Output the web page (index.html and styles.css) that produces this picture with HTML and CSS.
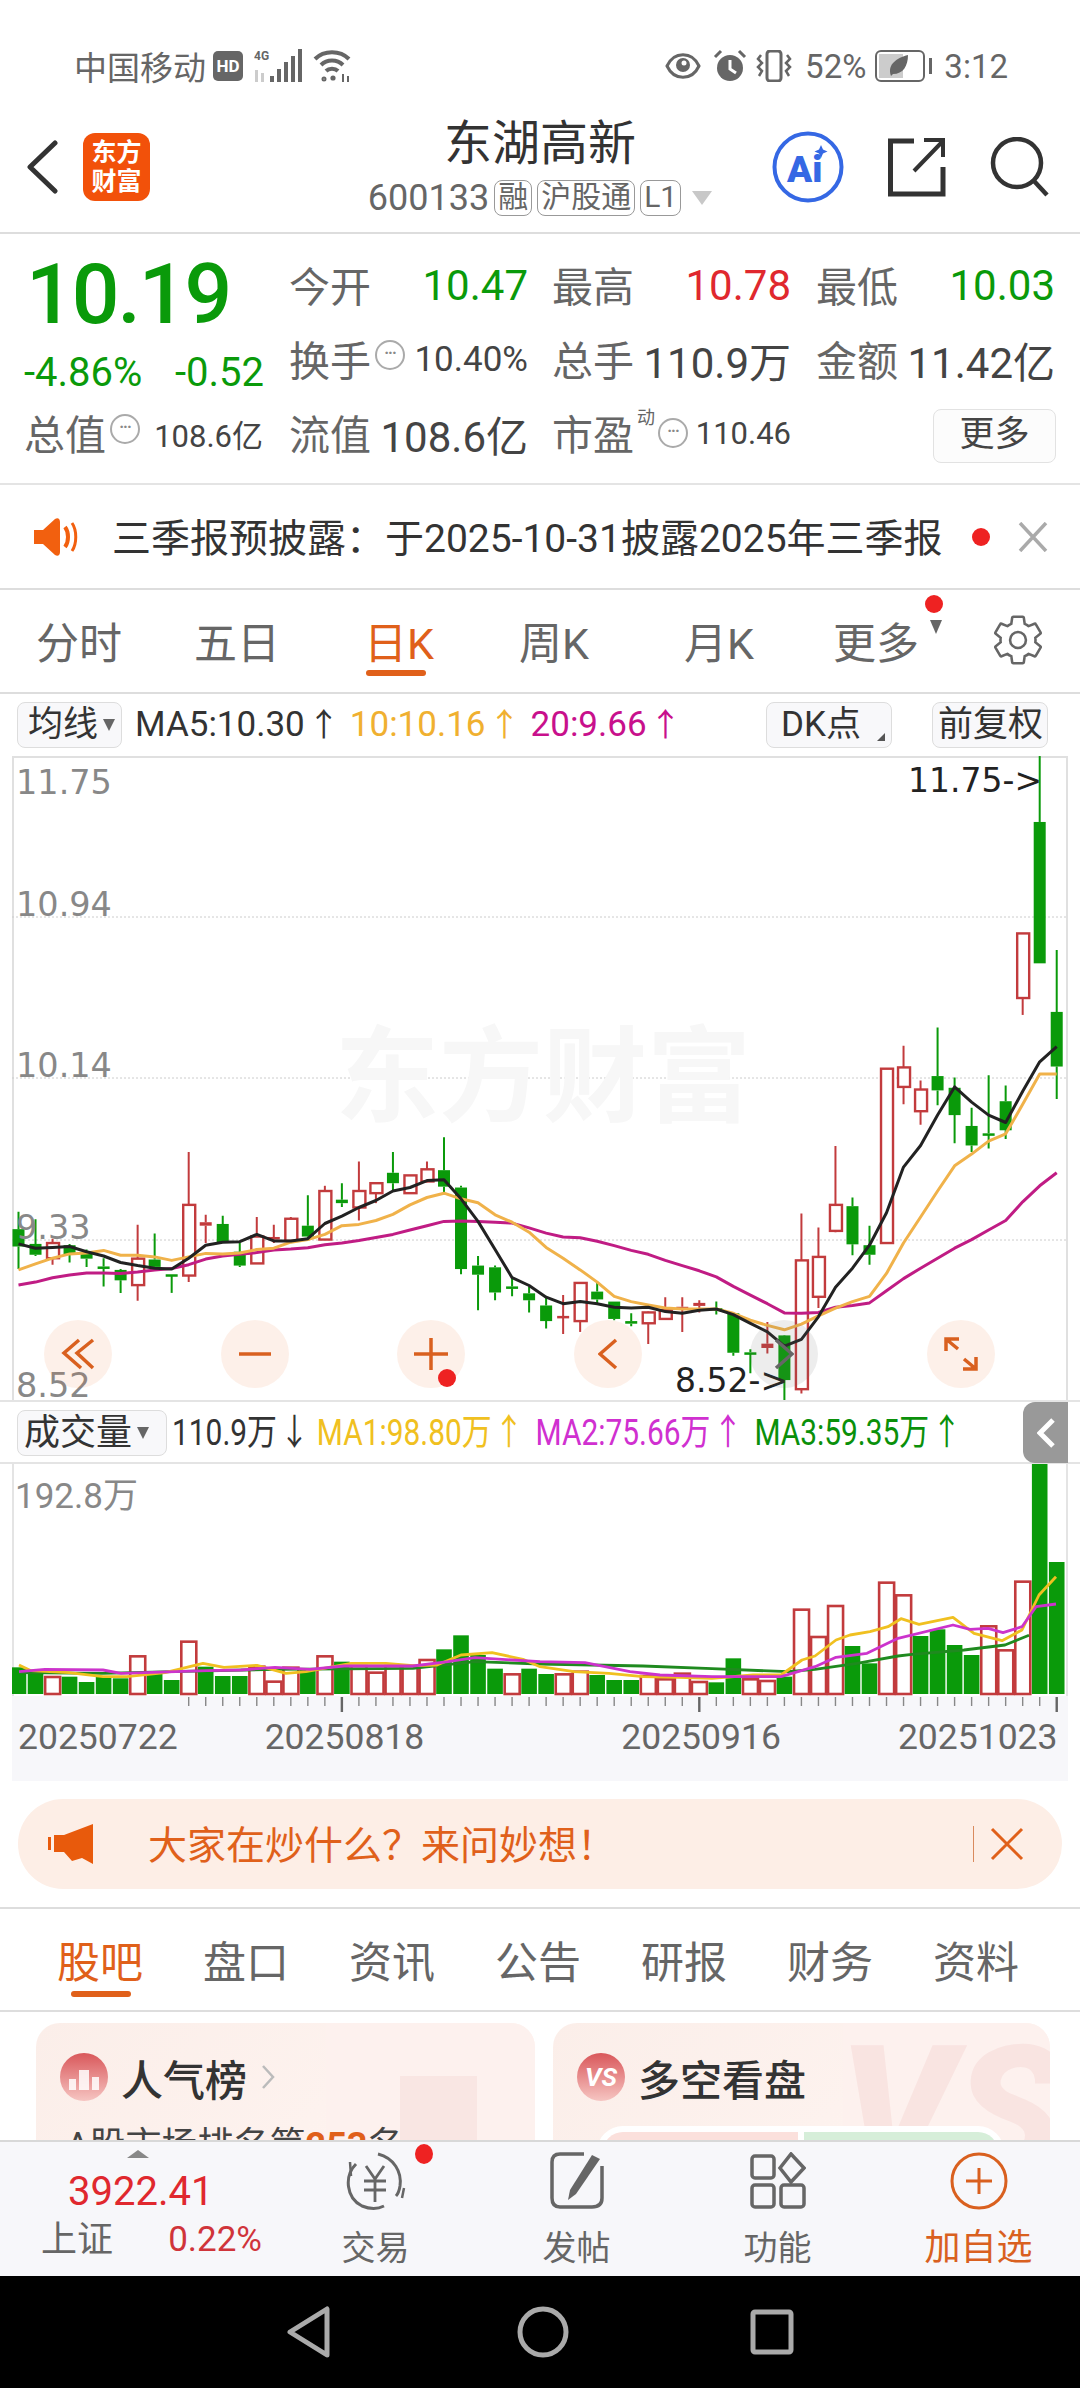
FILE: index.html
```html
<!DOCTYPE html>
<html lang="zh-CN">
<head>
    <meta charset="UTF-8">
    <meta name="viewport" content="width=device-width, initial-scale=1.0">
    <title>东湖高新</title>
    <link rel="stylesheet" href="styles.css">
</head>
<body>
<div class="page">
    <!-- status bar -->
    <div class="status">
        <span class="carrier">中国移动</span>
        <span class="hd">HD</span>
        <svg class="sig" width="50" height="34" viewBox="0 0 50 34">
            <text x="0" y="11" class="sig-txt">4G</text>
            <g fill="#ccc"><rect x="1" y="21" width="3" height="12"/><rect x="7" y="24" width="3" height="9"/></g>
            <g fill="#666"><rect x="16" y="27" width="4" height="6"/><rect x="23" y="20" width="4" height="13"/><rect x="30" y="13" width="4" height="20"/><rect x="37" y="7" width="4" height="26"/><rect x="44" y="0" width="4" height="33"/></g>
        </svg>
        <svg class="wifi" width="38" height="32" viewBox="0 0 38 32" fill="none" stroke="#666" stroke-width="4">
            <path d="M2 9 C11 0 27 0 36 9"/><path d="M8 15 C14 9 24 9 30 15"/><path d="M13 21 C16 18 22 18 25 21"/>
            <circle cx="11" cy="29" r="1" stroke-width="3"/><circle cx="20" cy="28" r="2.6" fill="#666" stroke="none"/>
            <path d="M30 24v8M35 26v6" stroke-width="2"/>
        </svg>
        <span class="status-gap"></span>
        <svg width="36" height="30" viewBox="0 0 36 30" fill="none" stroke="#666" stroke-width="3"><path d="M2 15 C9 0 27 0 34 15 C27 30 9 30 2 15Z"/><circle cx="18" cy="14" r="7" fill="#666" stroke="none"/><circle cx="19" cy="12" r="2.5" fill="#fff" stroke="none"/></svg>
        <svg class="st-alarm" width="34" height="34" viewBox="0 0 34 34"><circle cx="17" cy="19" r="13" fill="#666"/><path d="M17 11v9l6 4" fill="none" stroke="#fff" stroke-width="3"/><path d="M2 8 L8 2M32 8 L26 2" stroke="#666" stroke-width="3"/></svg>
        <svg class="st-vib" width="36" height="32" viewBox="0 0 36 32" fill="none" stroke="#666" stroke-width="2.5"><rect x="11" y="1" width="14" height="30" rx="3" stroke-width="3"/><path d="M5 5 L2 9 L6 13 L2 17 L6 21 L3 26M31 5 L34 9 L30 13 L34 17 L30 21 L33 26"/></svg>
        <span class="batt-pct">52%</span>
        <svg class="st-batt" width="58" height="32" viewBox="0 0 58 32"><rect x="1" y="1" width="48" height="30" rx="5" fill="#fff" stroke="#666" stroke-width="2"/><rect x="4" y="4" width="24" height="24" fill="#ccc"/><path d="M16 26 C12 14 22 8 33 5 C33 16 28 24 18 24Z" fill="#666"/><rect x="54" y="8" width="3" height="16" fill="#666"/></svg>
        <span class="clock">3:12</span>
    </div>

    <!-- header -->
    <div class="header">
        <div class="header-left">
            <svg width="31" height="54" viewBox="0 0 31 54" fill="none" stroke="#333" stroke-width="5" stroke-linecap="round" stroke-linejoin="round"><path d="M28 3 L3 27 L28 51"/></svg>
            <div class="logo"><span>东方</span><span>财富</span></div>
        </div>
        <div class="header-mid">
            <div class="title">东湖高新</div>
            <div class="subtitle">
                <span class="code">600133</span>
                <span class="tag">融</span><span class="tag">沪股通</span><span class="tag">L1</span>
                <span class="tri-down"></span>
            </div>
        </div>
        <div class="header-right">
            <svg width="72" height="72" viewBox="0 0 72 72"><circle cx="36" cy="36" r="33.5" fill="#fff" stroke="#3568e4" stroke-width="4"/><text x="15" y="51" class="ai-txt">Ai</text><path d="M49 14 L51 18.5 L55.5 20.5 L51 22.5 L49 27 L47 22.5 L42.5 20.5 L47 18.5Z" fill="#3568e4"/></svg>
            <svg width="58" height="60" viewBox="0 0 58 60" fill="none" stroke="#333" stroke-width="5"><path d="M26 4 H2.5 V57 H55 V30"/><path d="M26 34 L55 4 M36 3 H55 V20" stroke-width="4"/></svg>
            <svg width="60" height="60" viewBox="0 0 60 60" fill="none" stroke="#333" stroke-width="4.5"><circle cx="27" cy="26" r="24"/><path d="M44 44 L57 58"/></svg>
        </div>
    </div>

    <!-- quote -->
    <div class="quote">
        <div class="q-price">10.19</div>
        <div class="q-cell"><span class="lbl">今开</span><span class="val green">10.47</span></div>
        <div class="q-cell"><span class="lbl">最高</span><span class="val red">10.78</span></div>
        <div class="q-cell"><span class="lbl">最低</span><span class="val green">10.03</span></div>

        <div class="q-change"><span>-4.86%</span><span>-0.52</span></div>
        <div class="q-cell"><span class="lbl">换手<i class="dots">···</i></span><span class="val small">10.40%</span></div>
        <div class="q-cell"><span class="lbl">总手</span><span class="val">110.9万</span></div>
        <div class="q-cell"><span class="lbl">金额</span><span class="val">11.42亿</span></div>

        <div class="q-cell"><span class="lbl">总值<i class="dots">···</i></span><span class="val tiny">108.6亿</span></div>
        <div class="q-cell"><span class="lbl">流值</span><span class="val">108.6亿</span></div>
        <div class="q-cell"><span class="lbl">市盈<sup class="dyn">动</sup><i class="dots dots-pe">···</i></span><span class="val tiny">110.46</span></div>
        <div class="q-cell q-more"><span class="more-btn">更多</span></div>
    </div>

    <!-- notice -->
    <div class="notice">
        <svg width="44" height="38" viewBox="0 0 44 38" fill="#f2600f"><path d="M0 12 H9 L21 1 C24 -1 26 1 26 4 V34 C26 37 24 39 21 37 L9 26 H0Z"/><path d="M31 9 C35 14 35 24 31 29" fill="none" stroke="#f2600f" stroke-width="4"/><path d="M38 5 C43 12 43 26 38 33" fill="none" stroke="#f2600f" stroke-width="3"/></svg>
        <span class="notice-txt">三季报预披露：于2025-10-31披露2025年三季报</span>
        <span class="notice-dot"></span>
        <svg width="30" height="30" viewBox="0 0 30 30" stroke="#aaa" stroke-width="3.5"><path d="M2 1 L28 29 M28 1 L2 29"/></svg>
    </div>

    <!-- period tabs -->
    <div class="period-tabs">
        <span>分时</span><span>五日</span><span class="on">日K</span><span>周K</span><span>月K</span>
        <span class="more-tab">更多<i class="m-dot"></i><i class="m-tri"></i></span>
        <svg class="gear" width="56" height="56" viewBox="0 0 24 24" fill="none" stroke="#666" stroke-width="1.1"><path d="M19.43 12.98c.04-.32.07-.64.07-.98s-.03-.66-.07-.98l2.11-1.65c.19-.15.24-.42.12-.64l-2-3.46c-.12-.22-.39-.3-.61-.22l-2.49 1c-.52-.4-1.08-.73-1.69-.98l-.38-2.65C14.46 2.18 14.25 2 14 2h-4c-.25 0-.46.18-.49.42l-.38 2.65c-.61.25-1.17.59-1.69.98l-2.49-1c-.23-.09-.49 0-.61.22l-2 3.46c-.13.22-.07.49.12.64l2.11 1.65c-.04.32-.07.65-.07.98s.03.66.07.98l-2.11 1.65c-.19.15-.24.42-.12.64l2 3.46c.12.22.39.3.61.22l2.49-1c.52.4 1.08.73 1.69.98l.38 2.65c.03.24.24.42.49.42h4c.25 0 .46-.18.49-.42l.38-2.65c.61-.25 1.17-.59 1.69-.98l2.49 1c.23.09.49 0 .61-.22l2-3.46c.12-.22.07-.49-.12-.64l-2.11-1.65z"/><circle cx="12" cy="12" r="3.4"/></svg>
    </div>

    <!-- MA legend -->
    <div class="ma-row">
        <span class="pick">均线<i class="pick-tri"></i></span>
        <span class="ma ma-black">MA5:10.30<b>↑</b></span>
        <span class="ma ma-orange">10:10.16<b>↑</b></span>
        <span class="ma ma-pink">20:9.66<b>↑</b></span>
        <span class="pick pick-dk">DK点<i class="corner"></i></span>
        <span class="pick pick-fq">前复权</span>
    </div>

    <!-- k line -->
    <div class="kline-wrap">
        <svg id="kline" class="kline" width="1056" height="644" viewBox="12 756 1056 644">
            <g class="grid"><path d="M12 917H1068M12 1078H1068M12 1240H1068"/></g>
            <text x="335" y="1114" class="watermark">东方财富</text>
            <g id="candles"></g>
            <g class="axis">
                <text x="16" y="794">11.75</text>
                <text x="16" y="916">10.94</text>
                <text x="16" y="1077">10.14</text>
                <text x="16" y="1239">9.33</text>
                <text x="16" y="1397">8.52</text>
            </g>
            <text x="908" y="792" class="mark">11.75-&gt;</text>
            <text x="675" y="1392" class="mark">8.52-&gt;</text>
        </svg>
        <div class="chart-btns">
            <span class="c-btn"><svg width="34" height="32" viewBox="0 0 34 32"><path d="M18 2 L3 15 L20 30 M32 2 L16 15 L32 30"/></svg></span>
            <span class="c-btn"><svg width="34" height="32" viewBox="0 0 34 32"><path d="M1 16 H33"/></svg></span>
            <span class="c-btn c-plus"><svg width="34" height="34" viewBox="0 0 34 34"><path d="M0 17 H34 M17 1 V33"/></svg><i></i></span>
            <span class="c-btn"><svg width="20" height="32" viewBox="0 0 20 32"><path d="M18 2 L2 16 L18 30"/></svg></span>
            <span class="c-btn c-grey"><svg width="20" height="32" viewBox="0 0 20 32"><path d="M2 2 L18 16 L2 30"/></svg></span>
            <span class="c-btn"><svg width="34" height="34" viewBox="0 0 34 34"><path d="M2 14 V2 H15 M2 2 L14 12 M32 20 V32 H19 M32 32 L20 22"/></svg></span>
        </div>
    </div>

    <!-- volume -->
    <div class="vol-head">
        <span class="pick pick-vol">成交量<i class="pick-tri"></i></span>
        <div class="vol-legend">
            <span class="v-black">110.9万<b>↓</b></span>
            <span class="v-yellow">MA1:98.80万<b>↑</b></span>
            <span class="v-pink">MA2:75.66万<b>↑</b></span>
            <span class="v-green">MA3:59.35万<b>↑</b></span>
        </div>
        <span class="toggle"><svg width="18" height="30" viewBox="0 0 18 30" fill="none" stroke="#fff" stroke-width="5"><path d="M16 2 L3 15 L16 28"/></svg></span>
    </div>
    <div class="vol-wrap">
        <svg id="vol" class="vol" width="1056" height="232" viewBox="12 1464 1056 232">
            <g id="bars"></g>
            <text x="15" y="1508" class="vol-axis">192.8万</text>
        </svg>
    </div>
    <div class="dates">
        <svg id="ticks" class="ticks" width="1056" height="18" viewBox="12 1696 1056 18"></svg>
        <div class="date-row"><span>20250722</span><span>20250818</span><span>20250916</span><span>20251023</span></div>
    </div>

    <!-- ask banner -->
    <div class="banner">
        <svg width="46" height="40" viewBox="0 0 46 40"><path d="M0 13h3v13H0z" fill="#e85a0c"/><path d="M6 11 H16 L45 0 V40 L34 34 L24 37 L16 28 H6Z" fill="#e85a0c"/></svg>
        <span class="banner-txt">大家在炒什么？来问妙想！</span>
        <span class="banner-sep"></span>
        <svg width="34" height="34" viewBox="0 0 34 34" stroke="#e0601a" stroke-width="3"><path d="M2 2 L32 32 M32 2 L2 32"/></svg>
    </div>

    <!-- bottom tabs -->
    <div class="info-tabs">
        <span class="on">股吧</span><span>盘口</span><span>资讯</span><span>公告</span><span>研报</span><span>财务</span><span>资料</span>
    </div>

    <!-- cards, cut off by the bottom bar -->
    <div class="cards">
        <div class="card">
            <i class="card-shade"></i><i class="card-bar"></i>
            <div class="card-head">
                <svg width="48" height="48" viewBox="0 0 48 48"><defs><linearGradient id="cg" x1="0" y1="0" x2="0" y2="1"><stop offset="0" stop-color="#d9575a"/><stop offset="1" stop-color="#f6c5c2"/></linearGradient></defs><circle cx="24" cy="24" r="24" fill="url(#cg)"/><path d="M9 37V26h7v11zM19 37V17h10v20zM32 37V24h7v13z" fill="#fff" opacity=".85"/></svg>
                <span class="card-title">人气榜</span>
                <svg class="card-arrow" width="14" height="24" viewBox="0 0 14 24" fill="none" stroke="#bbb" stroke-width="2.5"><path d="M2 1 L12 12 L2 23"/></svg>
            </div>
            <div class="card-sub">A股市场排名第<b>253</b>名</div>
        </div>
        <div class="card">
            <i class="card-shade"></i><span class="card-vs">VS</span>
            <div class="card-head">
                <span class="vs-icon">VS</span>
                <span class="card-title">多空看盘</span>
            </div>
            <div class="ls-box"><i class="ls-red"></i><i class="ls-green"></i></div>
        </div>
    </div>

    <!-- bottom bar -->
    <div class="bottom">
        <div class="index">
            <i class="idx-tri"></i>
            <div class="idx-val">3922.41</div>
            <div class="idx-row"><span>上证</span><span class="idx-pct">0.22%</span></div>
        </div>
        <div class="b-item">
            <svg width="68" height="58" viewBox="0 0 68 58" fill="none" stroke="#666" stroke-width="3"><path d="M14 12 C2 24 4 46 20 54 C30 58 38 56 42 54"/><path d="M36 2 C52 6 60 20 58 34 C57 40 56 42 54 44"/><path d="M9 24 L8 10 M60 46 L62 36" stroke-width="2.5"/><path d="M24 14 L33 27 L42 14 M22 29 H44 M22 38 H44 M33 27 V50" stroke-width="2.8"/></svg>
            <i class="b-dot"></i>
            <span>交易</span>
        </div>
        <div class="b-item">
            <svg width="58" height="58" viewBox="0 0 58 58" fill="none" stroke="#666" stroke-width="3.5"><path d="M36 2 H12 Q4 2 4 10 V46 Q4 55 12 55 H44 Q54 55 54 46 V14"/><path d="M22 38 L44 3 L52 7 L28 42 L20 48Z" fill="#666" stroke="none"/></svg>
            <span>发帖</span>
        </div>
        <div class="b-item">
            <svg width="56" height="58" viewBox="0 0 56 58" fill="none" stroke="#666" stroke-width="3.5"><rect x="2" y="4" width="22" height="22" rx="3"/><path d="M41 2 L54 16 L41 30 L30 16Z"/><rect x="2" y="33" width="22" height="22" rx="3"/><rect x="31" y="33" width="23" height="22" rx="3"/></svg>
            <span>功能</span>
        </div>
        <div class="b-item b-add">
            <svg width="58" height="58" viewBox="0 0 58 58" fill="none" stroke="#d9601f" stroke-width="3"><circle cx="29" cy="29" r="27"/><path d="M16 29 H42 M29 16 V42"/></svg>
            <span>加自选</span>
        </div>
    </div>

    <!-- android nav -->
    <div class="nav">
        <svg width="44" height="52" viewBox="0 0 44 52" fill="none" stroke="#aaa" stroke-width="5" stroke-linejoin="round"><path d="M40 3 V49 L3 26Z"/></svg>
        <svg width="52" height="52" viewBox="0 0 52 52" fill="none" stroke="#aaa" stroke-width="5"><circle cx="26" cy="26" r="23"/></svg>
        <svg class="nav-sq" width="44" height="46" viewBox="0 0 44 46" fill="none" stroke="#aaa" stroke-width="5"><rect x="3" y="3" width="38" height="40" rx="2"/></svg>
    </div>
</div>
<script src="chart.js"></script>
</body>
</html>
```

FILE: styles.css
```css
* {
    box-sizing: border-box;
}

html, body {
    margin: 0;
    padding: 0;
}

body {
    width: 1080px;
    height: 2388px;
    overflow: hidden;
    background: #fff;
    font-family: Roboto, "Noto Sans CJK SC", sans-serif;
    color: #333;
}

i { font-style: normal; }

.page {
    width: 1080px;
    height: 2388px;
    display: flex;
    flex-direction: column;
    overflow: hidden;
}

/* status bar */
.status {
    height: 110px;
    padding: 22px 72px 0 74px;
    display: flex;
    align-items: center;
    color: #666;
    font-size: 33px;
    flex: none;
}

.carrier { width: 133px; }

.hd {
    margin-left: 6px;
    width: 30px;
    height: 30px;
    border-radius: 5px;
    background: #666;
    color: #fff;
    font-size: 17px;
    font-weight: 700;
    text-align: center;
    line-height: 30px;
}

.sig { margin-left: 11px; }
.sig-txt { font: 700 12px Roboto, sans-serif; fill: #666; }
.wifi { margin-left: 9px; }
.status-gap { flex: 1; }
.st-alarm { margin-left: 12px; }
.st-vib { margin-left: 9px; }
.batt-pct { margin-left: 13px; font-size: 33px; }
.st-batt { margin-left: 9px; }
.clock { margin-left: 11px; font-size: 33px; }

/* header */
.header {
    height: 124px;
    flex: none;
    display: grid;
    grid-template-columns: 1fr auto 1fr;
    border-bottom: 2px solid #ddd;
}

.header-left {
    display: flex;
    align-items: center;
    padding: 0 0 8px 27px;
}

.logo {
    margin-left: 25px;
    width: 67px;
    height: 68px;
    border-radius: 12px;
    background: #f2510a;
    color: #fff;
    font-size: 25px;
    font-weight: 700;
    line-height: 29px;
    text-align: center;
    display: flex;
    flex-direction: column;
    justify-content: center;
}

.header-mid {
    padding-top: 8px;
    text-align: center;
}

.title {
    font-size: 48px;
    line-height: 52px;
    color: #333;
}

.subtitle {
    margin-top: 8px;
    height: 40px;
    display: flex;
    align-items: center;
    color: #666;
}

.code { font-size: 36px; margin-right: 5px; }

.tag {
    height: 36px;
    margin-right: 5px;
    padding: 0 3px;
    border: 1.5px solid #999;
    border-radius: 8px;
    font-size: 30px;
    line-height: 32px;
}

.tri-down {
    margin-left: 6px;
    border-left: 10px solid transparent;
    border-right: 10px solid transparent;
    border-top: 14px solid #c8c8c8;
}

.header-right {
    display: flex;
    align-items: center;
    justify-content: flex-end;
    padding: 0 30px 8px 0;
    gap: 44px;
}

.ai-txt { font: 900 37px Roboto, sans-serif; fill: #3568e4; }

/* quote block */
.quote {
    height: 251px;
    flex: none;
    padding: 14px 26px 13px 24px;
    display: grid;
    grid-template-columns: 265px 263px 264px 1fr;
    grid-template-rows: 74px 74px 74px;
    border-bottom: 2px solid #e4e4e4;
}

.q-price {
    font-size: 84px;
    font-weight: 500;
    color: #0a9a0a;
    line-height: 74px;
    padding: 10px 0 0 2px;
    letter-spacing: -2px;
    white-space: nowrap;
}

.q-change {
    width: 240px;
    display: flex;
    justify-content: space-between;
    align-items: center;
    padding-top: 26px;
    font-size: 40px;
    color: #0a9a0a;
}

.q-cell {
    width: 239px;
    display: flex;
    justify-content: space-between;
    align-items: center;
    white-space: nowrap;
}

.lbl {
    color: #666;
    font-size: 41px;
    display: flex;
    align-items: center;
    padding-bottom: 2px;
}

.val { font-size: 42px; color: #444; }
.val.small { font-size: 35px; }
.val.tiny { font-size: 31px; }
.val.green { color: #0a9a0a; }
.val.red { color: #e0282e; }

.dots {
    width: 30px;
    height: 30px;
    margin: -6px 0 0 4px;
    border: 2px solid #aaa;
    border-radius: 50%;
    color: #888;
    font-size: 16px;
    font-weight: 700;
    line-height: 22px;
    text-align: center;
    letter-spacing: -1px;
}

.dyn {
    font-size: 18px;
    margin: -28px 0 0 3px;
    line-height: 20px;
}

.dots-pe { margin-left: 3px; margin-top: 2px; }

.q-more { justify-content: flex-end; width: 240px; }

.more-btn {
    width: 123px;
    height: 54px;
    margin-top: 6px;
    border: 1.5px solid #e2e2e2;
    border-radius: 8px;
    background: #fcfcfc;
    text-align: center;
    font-size: 35px;
    line-height: 50px;
    color: #444;
}

/* notice */
.notice {
    height: 105px;
    flex: none;
    padding: 0 32px 0 34px;
    display: flex;
    align-items: center;
    border-bottom: 2px solid #ddd;
}

.notice-txt {
    margin-left: 34px;
    width: 860px;
    padding-bottom: 4px;
    font-size: 39px;
    color: #333;
    white-space: nowrap;
}

.notice-dot {
    width: 18px;
    height: 18px;
    border-radius: 50%;
    background: #ee2222;
}

.notice svg:last-child { margin-left: auto; }

/* period tabs */
.period-tabs {
    height: 104px;
    flex: none;
    padding-bottom: 2px;
    display: grid;
    grid-template-columns: 158px 158px 166px 144px 186px 128px 1fr;
    align-items: center;
    text-align: center;
    font-size: 43px;
    color: #666;
    border-bottom: 2px solid #ddd;
}

.period-tabs .on {
    position: relative;
    color: #e0601a;
}

.period-tabs .on::after {
    content: "";
    position: absolute;
    left: 50px;
    top: 61px;
    width: 60px;
    height: 6px;
    border-radius: 3px;
    background: #e0601a;
}

.more-tab { position: relative; }

.m-dot {
    position: absolute;
    left: 113px;
    top: -14px;
    width: 18px;
    height: 18px;
    border-radius: 50%;
    background: #ee2222;
}

.m-tri {
    position: absolute;
    left: 118px;
    top: 11px;
    border-left: 6px solid transparent;
    border-right: 6px solid transparent;
    border-top: 14px solid #666;
}

.gear { margin-left: 50px; }

/* MA row */
.ma-row {
    height: 62px;
    flex: none;
    padding: 8px 32px 0 17px;
    display: flex;
    align-items: flex-start;
    font-size: 35px;
    white-space: nowrap;
}

.pick {
    flex: none;
    height: 46px;
    border: 1.5px solid #ddd;
    border-radius: 8px;
    background: #f8f8fa;
    color: #333;
    font-size: 35px;
    line-height: 42px;
    display: flex;
    align-items: center;
    padding: 0 6px 0 10px;
    position: relative;
}

.pick-tri {
    margin-left: 5px;
    border-left: 6px solid transparent;
    border-right: 6px solid transparent;
    border-top: 12px solid #666;
}

.ma { line-height: 46px; margin-left: 13px; }
.ma b { font-weight: 400; font-size: 32px; margin-left: 3px; }
.ma-black { color: #333; }
.ma-orange { color: #f0b030; margin-left: 10px; }
.ma-pink { color: #c8108c; margin-left: 10px; }

.pick-dk {
    margin-left: auto;
    width: 126px;
    padding-left: 14px;
}

.corner {
    position: absolute;
    right: 6px;
    bottom: 6px;
    border-left: 8px solid transparent;
    border-bottom: 8px solid #555;
}

.pick-fq {
    margin-left: 40px;
    width: 116px;
    padding: 0 5px;
}

/* k line chart */
.kline-wrap {
    position: relative;
    height: 644px;
    flex: none;
    margin: 0 12px;
    border: solid #e0e0e0;
    border-width: 2px 2px 0;
    width: 1056px;
}

.kline {
    position: absolute;
    left: -2px;
    top: -2px;
}

.grid path {
    fill: none;
    stroke: #ccc;
    stroke-width: 1;
    stroke-dasharray: 2 2;
}

.watermark {
    font-size: 104px;
    font-weight: 700;
    fill: #f7f7f7;
}

.axis text {
    font-family: "DejaVu Sans", sans-serif;
    font-size: 33.5px;
    fill: #888;
}

.mark {
    font-family: "DejaVu Sans", sans-serif;
    font-size: 33px;
    fill: #222;
}

.chart-btns {
    position: absolute;
    left: 30px;
    top: 562px;
    display: flex;
    gap: 108.6px;
}

.c-btn {
    position: relative;
    width: 68px;
    height: 68px;
    border-radius: 50%;
    background: rgba(240, 110, 40, 0.1);
    display: flex;
    align-items: center;
    justify-content: center;
}

.c-btn svg {
    fill: none;
    stroke: #d9601f;
    stroke-width: 3.5;
}

.c-grey { background: rgba(110, 110, 110, 0.12); }
.c-grey svg { stroke: #666; }

.c-plus i {
    position: absolute;
    left: 41px;
    top: 49px;
    width: 18px;
    height: 18px;
    border-radius: 50%;
    background: #ee2222;
}

/* volume */
.vol-head {
    position: relative;
    height: 64px;
    flex: none;
    padding: 8px 0 0 17px;
    display: flex;
    align-items: flex-start;
    border-top: 2px solid #e4e4e4;
    border-bottom: 2px solid #e4e4e4;
}

.pick-vol {
    width: 150px;
    font-size: 36px;
    padding-left: 6px;
}

.vol-legend {
    margin: 0 0 0 5px;
    display: flex;
    font-size: 36px;
    line-height: 46px;
    white-space: nowrap;
    transform: scaleX(0.83);
    transform-origin: left center;
}

.vol-legend b { font-weight: 400; margin-left: 3px; }
.vol-legend span { margin-right: 9px; }
.vol-legend .v-yellow, .vol-legend .v-pink { margin-right: 14px; }
.v-black { color: #333; }
.v-yellow { color: #f0c020; }
.v-pink { color: #d030d0; }
.v-green { color: #0a900a; }

.toggle {
    position: absolute;
    right: 12px;
    top: 0;
    width: 45px;
    height: 61px;
    border-radius: 12px 0 0 12px;
    background: #999;
    display: flex;
    align-items: center;
    justify-content: center;
}

.vol-wrap {
    height: 232px;
    flex: none;
    margin: 0 12px;
    width: 1056px;
    border-right: 2px solid #e4e4e4;
    border-left: 2px solid #e4e4e4;
    position: relative;
}

.vol {
    position: absolute;
    left: -2px;
    top: 0;
}

.vol-axis {
    font-size: 35px;
    fill: #888;
}

.dates {
    height: 85px;
    flex: none;
    margin: 0 12px;
    width: 1056px;
    background: #f7f7fa;
}

.ticks { display: block; }

.date-row {
    padding-left: 6px;
    display: flex;
    font-size: 35.5px;
    color: #666;
    line-height: 42px;
    margin-top: 2px;
}

.date-row span:nth-child(2) { margin-left: 87px; }
.date-row span:nth-child(3) { margin-left: 197px; }
.date-row span:nth-child(4) { margin-left: 117px; }

/* banner */
.banner {
    height: 90px;
    flex: none;
    margin: 18px 18px 18px;
    padding: 0 38px 0 30px;
    border-radius: 45px;
    background: #fdeee6;
    display: flex;
    align-items: center;
}

.banner-txt {
    margin-left: 54px;
    padding-bottom: 4px;
    font-size: 39px;
    color: #e0601a;
}

.banner-sep {
    margin-left: auto;
    width: 1.5px;
    height: 36px;
    background: #d98a5e;
}

.banner svg:last-child { margin-left: 16px; }

/* info tabs */
.info-tabs {
    height: 105px;
    flex: none;
    padding: 0 0 2px 57px;
    display: flex;
    gap: 62px;
    align-items: center;
    font-size: 43px;
    color: #666;
    border-top: 2px solid #ddd;
    border-bottom: 2px solid #ddd;
}

.info-tabs span { width: 84px; white-space: nowrap; }

.info-tabs .on {
    position: relative;
    color: #e0601a;
}

.info-tabs .on::after {
    content: "";
    position: absolute;
    left: 14px;
    top: 63px;
    width: 60px;
    height: 6px;
    border-radius: 3px;
    background: #e0601a;
}

/* cards */
.cards {
    height: 128px;
    flex: none;
    overflow: hidden;
    padding: 11px 29px 0 36px;
    display: grid;
    grid-template-columns: 499px 497px;
    gap: 18px;
}

.card {
    position: relative;
    height: 240px;
    border-radius: 24px;
    overflow: hidden;
    background: linear-gradient(135deg, #fbeee9, #fff6f3);
    padding: 30px 0 0 24px;
}

.card-shade {
    position: absolute;
    left: 290px;
    top: 0;
    width: 209px;
    height: 240px;
    background: #fdf1ee;
}

.card-bar {
    position: absolute;
    left: 364px;
    top: 53px;
    width: 77px;
    height: 190px;
    background: #f9e6e3;
}

.card-vs {
    position: absolute;
    left: 286px;
    top: -6px;
    font-size: 180px;
    line-height: 190px;
    font-weight: 900;
    font-style: italic;
    color: #f9e4e1;
}

.card-head {
    position: relative;
    display: flex;
    align-items: center;
    height: 48px;
}

.card-title {
    margin-left: 13px;
    font-size: 42px;
    font-weight: 500;
    color: #333;
}

.card-arrow { margin-left: 14px; }

.vs-icon {
    width: 48px;
    height: 48px;
    border-radius: 50%;
    background: linear-gradient(#d9575a, #f6c5c2);
    color: #fff;
    font-size: 26px;
    font-weight: 700;
    font-style: italic;
    line-height: 48px;
    text-align: center;
}

.card-sub {
    position: relative;
    margin: 25px 0 0 6px;
    font-size: 36px;
    line-height: 40px;
    color: #444;
}

.card-sub b { color: #e0601a; }

.ls-box {
    position: relative;
    margin: 25px 46px 0 20px;
    height: 60px;
    padding: 4px;
    border: 2px solid #fff;
    border-radius: 26px 26px 0 0;
    display: flex;
    gap: 6px;
    background: #fff;
}

.ls-red { flex: 1; background: #fbe0dc; border-radius: 20px 0 0 0; }
.ls-green { flex: 1; background: #d6eed9; border-radius: 0 20px 0 0; }

/* bottom bar */
.bottom {
    height: 136px;
    flex: none;
    display: grid;
    grid-template-columns: 275px repeat(4, 201px);
    background: #f7f7fa;
    border-top: 2px solid #d8d8d8;
}

.index { position: relative; padding: 0 0 0 41px; }

.idx-tri {
    position: absolute;
    left: 127px;
    top: 8px;
    border-left: 11px solid transparent;
    border-right: 11px solid transparent;
    border-bottom: 8px solid #888;
}

.idx-val {
    margin: 28px 0 0 27px;
    font-size: 40px;
    line-height: 44px;
    color: #e0282e;
}

.idx-row {
    margin-top: 4px;
    display: flex;
    width: 221px;
    justify-content: space-between;
    align-items: center;
    font-size: 36px;
    line-height: 44px;
    color: #666;
}

.idx-pct { color: #d0343a; font-size: 35px; }

.b-item {
    position: relative;
    display: flex;
    flex-direction: column;
    align-items: center;
    padding-top: 10px;
    font-size: 34px;
    color: #666;
    line-height: 40px;
}

.b-item span { margin-top: 18px; }

.b-dot {
    position: absolute;
    left: 140px;
    top: 2px;
    width: 18px;
    height: 20px;
    border-radius: 50%;
    background: #ee2222;
}

.b-add { color: #d9601f; }
.b-add span { font-size: 36px; }

/* android nav */
.nav {
    flex: 1;
    background: #000;
    position: relative;
    display: flex;
    align-items: center;
    justify-content: center;
    gap: 186px;
}

.nav-sq { margin-left: -5px; }
```

FILE: chart.js
```js
// k line and volume are drawn from pixel values read off the chart
var NS = 'http://www.w3.org/2000/svg';
var GREEN = '#0a9a0a', RED = '#c23b3d';

function el(parent, name, attrs) {
    var e = document.createElementNS(NS, name);
    for (var k in attrs) e.setAttribute(k, attrs[k]);
    parent.appendChild(e);
    return e;
}

function candleX(i) { return 18.5 + 17.02 * i; }
function ky(v) { return 740 + v / 2.306; }

// [colour, high, body top, body bottom, low]
var candles = [
    ['g',1088,1128,1168,1220],['g',1105,1162,1187,1190],['r',1150,1160,1195,1210],['g',1162,1165,1187,1205],
    ['g',1175,1183,1196,1215],['g',1195,1214,1218,1260],['g',1220,1222,1246,1275],['r',1118,1196,1257,1293],
    ['g',1138,1198,1215,1220],['g',1232,1232,1236,1275],['r',950,1072,1235,1250],['r',1095,1112,1120,1160],
    ['g',1097,1116,1158,1160],['g',1160,1180,1212,1215],['r',1100,1145,1207,1208],['r',1118,1146,1152,1160],
    ['r',1100,1104,1155,1155],['g',1050,1120,1145,1150],['r',1028,1040,1152,1152],['g',1022,1060,1068,1077],
    ['r',972,1040,1078,1108],['r',1022,1022,1045,1068],['g',950,998,1022,1040],['r',1003,1004,1045,1047],
    ['r',972,990,1018,1020],['g',916,992,1030,1045],['g',1028,1032,1220,1232],['g',1190,1212,1233,1315],
    ['g',1212,1216,1274,1292],['g',1238,1260,1264,1283],['g',1260,1276,1292,1320],['g',1285,1304,1340,1357],
    ['r',1280,1328,1333,1370],['r',1252,1252,1340,1365],['g',1250,1272,1290,1298],['g',1295,1295,1335,1338],
    ['g',1322,1340,1346,1352],['r',1318,1320,1345,1393],['r',1285,1315,1335,1335],['r',1285,1307,1312,1365],
    ['r',1292,1298,1305,1320],['g',1295,1310,1313,1325],['g',1320,1322,1413,1420],['g',1405,1412,1416,1460],
    ['r',1342,1392,1402,1415],['g',1372,1373,1476,1522],['r',1092,1200,1497,1507],['r',1124,1192,1284,1310],
    ['r',936,1072,1132,1135],['g',1055,1075,1163,1188],['g',1120,1165,1187,1210],['r',758,758,1160,1160],
    ['r',705,755,800,840],['r',785,806,856,887],['g',663,775,808,842],['g',778,802,865,930],
    ['g',848,890,935,950],['g',773,907,911,942],['g',797,833,900,920],['r',446,446,595,634],
    ['g',37,189,515,515],['g',484,627,753,828]
];

var ma5 = [1162,1172,1170,1168,1180,1190,1205,1212,1218,1220,1195,1165,1158,1157,1140,1155,1155,1150,1115,1098,1078,1062,1040,1032,1016,1014,1058,1110,1175,1240,1258,1285,1300,1295,1300,1308,1310,1308,1318,1322,1315,1312,1325,1345,1365,1398,1382,1330,1262,1218,1165,1090,985,935,865,800,835,865,882,810,742,707];
var ma10 = [1222,1208,1195,1185,1183,1177,1188,1188,1192,1200,1192,1184,1185,1183,1175,1172,1158,1152,1140,1120,1117,1108,1094,1072,1055,1045,1058,1067,1095,1112,1135,1170,1195,1222,1250,1283,1295,1303,1310,1312,1312,1312,1322,1338,1350,1360,1347,1328,1310,1295,1283,1230,1160,1100,1040,982,955,925,908,840,770,770];
var ma20 = [1257,1250,1240,1234,1229,1229,1230,1227,1222,1219,1210,1197,1190,1186,1182,1176,1174,1171,1164,1160,1154,1147,1140,1130,1120,1110,1109,1110,1112,1114,1125,1137,1146,1148,1156,1166,1177,1186,1200,1212,1224,1238,1260,1280,1300,1321,1322,1320,1308,1304,1298,1270,1242,1218,1195,1172,1152,1130,1108,1065,1028,998];

var g = document.getElementById('candles');
candles.forEach(function (c, i) {
    var x = candleX(i), col = c[0] === 'g' ? GREEN : RED;
    var top = ky(c[2]), bot = ky(c[3]);
    // wick above and below so hollow bodies stay empty
    el(g, 'path', { d: 'M' + x + ' ' + ky(c[1]) + 'V' + top + 'M' + x + ' ' + bot + 'V' + ky(c[4]), stroke: col, 'stroke-width': 2, fill: 'none' });
    if (c[0] === 'g' || bot - top < 5) {
        el(g, 'rect', { x: x - 6, y: top, width: 12, height: Math.max(bot - top, 2.5), fill: col });
    } else {
        el(g, 'rect', { x: x - 5.5, y: top, width: 12, height: bot - top, fill: '#fff', stroke: col, 'stroke-width': 2.4 });
    }
});

function maLine(vals, col) {
    var d = vals.map(function (v, i) { return (i ? 'L' : 'M') + candleX(i).toFixed(1) + ' ' + ky(v).toFixed(1); }).join('');
    el(g, 'path', { d: d, stroke: col, 'stroke-width': 3, fill: 'none', 'stroke-linejoin': 'round' });
}
maLine(ma20, '#c01c84');
maLine(ma10, '#f0b24a');
maLine(ma5, '#222');

// volume bars: [colour, top]
var vols = [
    ['g',802],['g',815],['r',828],['g',830],['g',846],['g',830],['g',835],['r',766],['g',815],['g',840],
    ['r',722],['g',800],['g',828],['g',828],['r',797],['r',842],['r',800],['g',808],['r',766],['g',785],
    ['r',795],['r',815],['r',795],['r',795],['r',777],['g',748],['g',706],['g',765],['g',806],['r',820],
    ['g',806],['g',822],['r',820],['r',812],['g',825],['g',840],['g',840],['r',825],['r',835],['r',818],
    ['r',843],['g',847],['g',775],['r',835],['r',840],['g',830],['r',626],['r',708],['r',615],['g',738],
    ['g',790],['r',545],['r',583],['g',708],['g',688],['g',735],['g',765],['r',676],['r',748],['r',542],
    ['g',192],['g',486]
];
function vy(v) { return 1400 + v / 3; }

var b = document.getElementById('bars');
vols.forEach(function (v, i) {
    var x = candleX(i), top = vy(v[1]), bottom = 1694;
    if (v[0] === 'g') {
        el(b, 'rect', { x: x - 7.8, y: top, width: 15.6, height: bottom - top, fill: GREEN });
    } else {
        el(b, 'rect', { x: x - 7.4, y: top + 1, width: 15, height: bottom - top - 1, fill: '#fff', stroke: '#c23b3d', 'stroke-width': 2.6 });
    }
});

// volume lines, points are [page x, zoom y]
var vLines = [
    ['#1f8a1f', [[19,818],[103,820],[172,815],[275,808],[413,805],[475,785],[540,792],[643,798],[712,806],[788,815],[815,808],[857,790],[898,768],[912,763],[964,750],[1005,735],[1029,706]]],
    ['#f0c020', [[19,795],[31,812],[69,818],[103,830],[127,830],[165,818],[203,790],[224,802],[257,796],[286,820],[306,815],[351,790],[386,790],[413,797],[437,795],[461,765],[492,758],[523,778],[540,800],[574,815],[609,820],[643,830],[678,832],[712,835],[753,825],[781,825],[802,780],[815,768],[836,720],[850,705],[870,695],[888,680],[901,656],[919,673],[953,652],[974,700],[1002,722],[1022,690],[1039,585],[1056,530]]],
    ['#cc33cc', [[19,815],[45,808],[103,810],[121,820],[207,812],[241,810],[275,802],[310,808],[344,798],[413,798],[448,785],[475,773],[540,785],[585,788],[630,815],[660,825],[712,830],[781,830],[815,800],[836,772],[867,760],[898,715],[953,675],[970,688],[988,685],[1003,698],[1022,680],[1036,620],[1056,612]]]
];
vLines.forEach(function (l) {
    var d = l[1].map(function (p, i) { return (i ? 'L' : 'M') + p[0] + ' ' + vy(p[1]).toFixed(1); }).join('');
    el(b, 'path', { d: d, stroke: l[0], 'stroke-width': 2.8, fill: 'none', 'stroke-linejoin': 'round' });
});

// date ticks
var t = document.getElementById('ticks');
for (var i = 10; i < 62; i++) {
    var long = i === 19 || i === 40 || i === 61;
    el(t, 'rect', { x: candleX(i) - (long ? 1.2 : 0.7), y: 1697, width: long ? 2.4 : 1.4, height: long ? 15 : 9, fill: long ? '#666' : '#888' });
}
```
